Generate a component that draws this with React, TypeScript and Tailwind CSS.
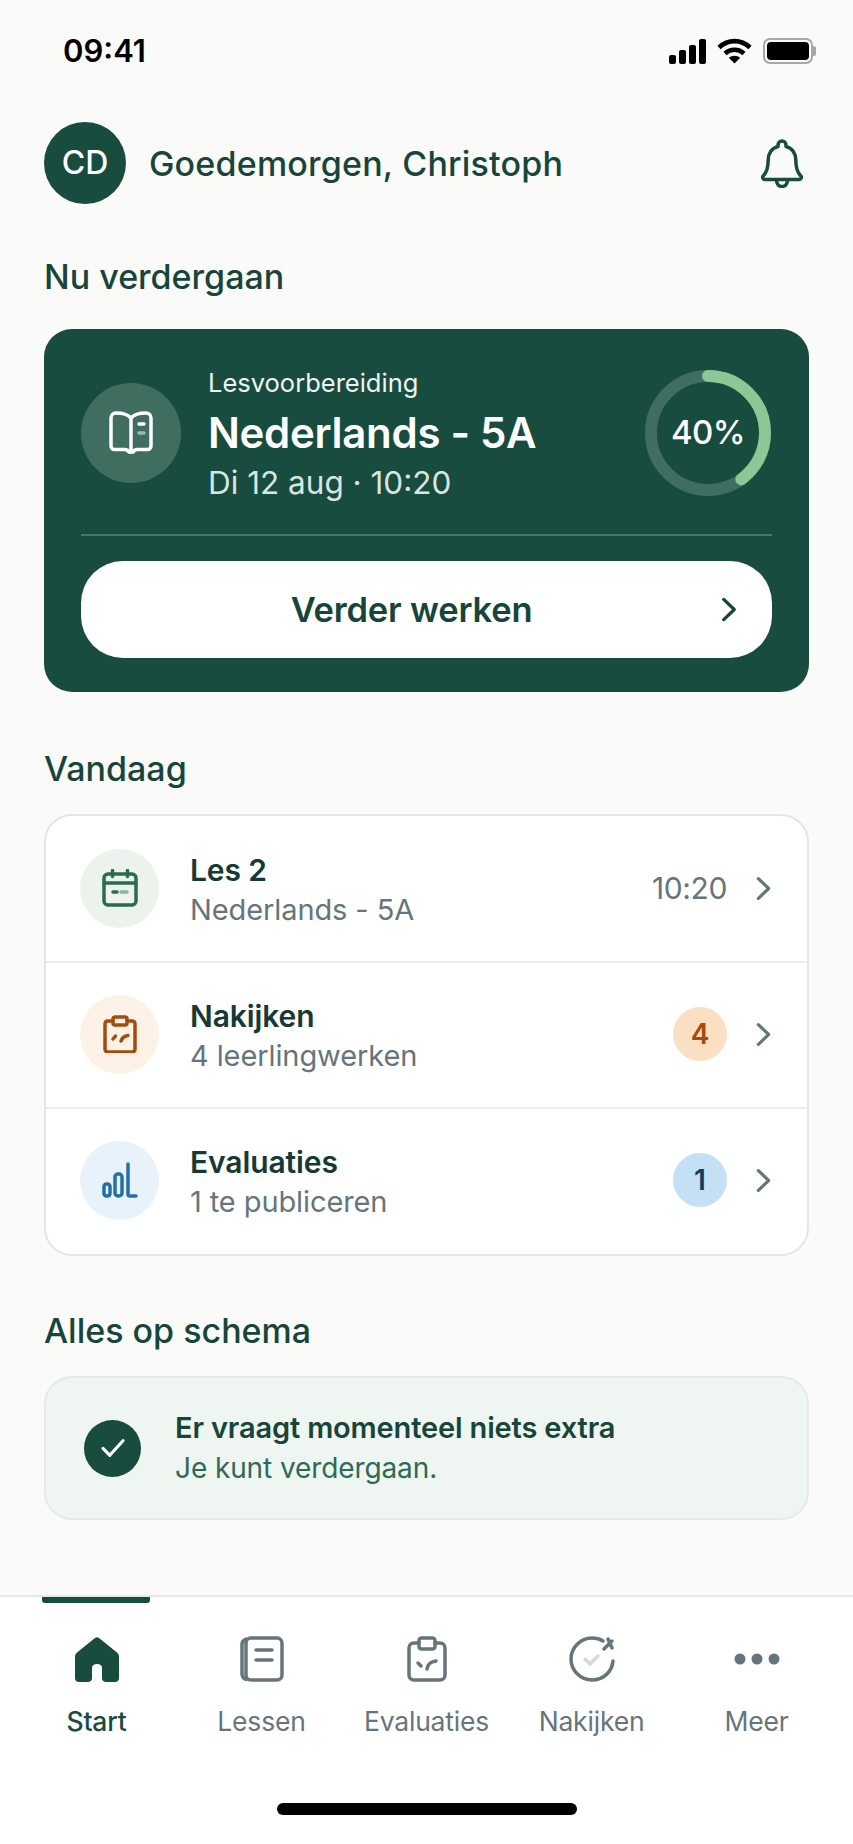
import React from 'react';

const font = { fontFamily: 'Inter, "Noto Sans", sans-serif' };

function Chevron({ className }: { className: string }) {
  return (
    <svg viewBox="0 0 16 26" fill="none" stroke="currentColor" strokeWidth="3.4" strokeLinecap="round" strokeLinejoin="round" className={className}>
      <path d="M2.5 2.5 13.5 13 2.5 23.5" />
    </svg>
  );
}

function StatusBar() {
  return (
    <div className="flex h-[104px] items-start justify-between pl-[63px] pr-[37px] pt-[34px]">
      <span className="text-[31px] leading-[34px] font-semibold text-black">09:41</span>
      <div className="flex items-center gap-[11px] pt-[4px]">
        <svg viewBox="0 0 37 25" className="h-[25px] w-[37px]" fill="#000">
          <rect x="0" y="16" width="7" height="9" rx="2" />
          <rect x="10" y="11" width="7" height="14" rx="2" />
          <rect x="20" y="6" width="7" height="19" rx="2" />
          <rect x="30" y="0" width="7" height="25" rx="2" />
        </svg>
        <svg viewBox="0 0 35 26" className="h-[26px] w-[35px]" fill="none" stroke="#000" strokeWidth="4.6">
          <path d="M2 9.5C11 1 24 1 33 9.5" />
          <path d="M8 15.5C13.5 10.5 21.5 10.5 27 15.5" />
          <path d="M17.5 25.5 11.8 19.8C15 17 20 17 23.2 19.8Z" fill="#000" stroke="none" />
        </svg>
        <div className="flex items-center">
          <div className="h-[26px] w-[50px] rounded-[7px] border-2 border-[#a8a8a8] p-[2px]">
            <div className="h-full w-full rounded-[4px] bg-black" />
          </div>
          <div className="h-[10px] w-[3px] rounded-r-[2px] bg-[#a8a8a8]" />
        </div>
      </div>
    </div>
  );
}

function Header() {
  return (
    <div className="flex items-center justify-between pl-[44px] pr-[50px] pt-[18px]">
      <div className="flex items-center gap-[23px]">
        <div className="flex h-[82px] w-[82px] items-center justify-center rounded-full bg-[#174c3f] text-[32px] font-medium text-white">CD</div>
        <span className="text-[34px] font-medium tracking-[0.2px] text-[#174539]">Goedemorgen, Christoph</span>
      </div>
      <svg viewBox="0 0 42 49" fill="none" stroke="#174c3f" strokeWidth="3.5" strokeLinejoin="round" className="h-[49px] w-[42px]">
        <path d="M21 2c2.300 0 4 1.800 4 4.200v1.300c6.500 1.800 9.800 7.200 9.800 13.500 0 7 1 12 5 16 1.200 1.300.5 3.500-1.500 3.500h-34.600c-2 0-2.700-2.200-1.500-3.500 4-4 5-9 5-16 0-6.300 3.300-11.700 9.800-13.500v-1.300c0-2.400 1.700-4.200 4-4.200Z" />
        <path d="M15.500 41c0 4 2.300 6.500 5.500 6.500s5.500-2.500 5.500-6.500" />
      </svg>
    </div>
  );
}

function Ring() {
  // 40% voortgang
  const r = 57;
  const c = 2 * Math.PI * r;
  return (
    <div className="relative h-[128px] w-[128px] shrink-0">
      <svg viewBox="0 0 128 128" className="h-full w-full -rotate-90" fill="none" strokeWidth="12">
        <circle cx="64" cy="64" r={r} stroke="#3f6e61" />
        <circle cx="64" cy="64" r={r} stroke="#8cc795" strokeLinecap="round" strokeDasharray={`${c * 0.4} ${c}`} />
      </svg>
      <span className="absolute inset-0 flex items-center justify-center text-[33px] font-medium tracking-[-0.5px] text-white">40%</span>
    </div>
  );
}

function ContinueCard() {
  return (
    <div className="mx-[44px] mt-[32px] h-[363px] rounded-[28px] bg-[#174c3f] px-[37px] pt-[29px]">
      <div className="flex h-[150px] items-center">
        <div className="flex h-[100px] w-[100px] shrink-0 items-center justify-center rounded-full bg-[#3f6e61]">
          <svg viewBox="0 0 44 44" fill="none" stroke="#fff" strokeWidth="3.500" strokeLinejoin="round" strokeLinecap="round" className="h-[44px] w-[44px]">
            <path d="M22 7C19 3.500 14 2 7 2 4 2 2 4 2 7v28c0 2 1.500 3.500 3.500 3.500h10c2 0 3.500.8 4.500 2.500h4c1-1.700 2.500-2.500 4.500-2.500h10c2 0 3.500-1.500 3.500-3.500V7c0-3-2-5-5-5-7 0-12 1.500-15 5Z" />
            <path d="M22 7v34" />
            <path d="M30 13h5" />
            <path d="M30 22h5" stroke="#9db8af" />
          </svg>
        </div>
        <div className="ml-[27px] flex flex-1 flex-col">
          <span className="text-[25.5px] leading-[50px] text-[#eef4f1]">Lesvoorbereiding</span>
          <span className="text-[42px] leading-[50px] font-semibold tracking-[-0.3px] text-white">Nederlands - 5A</span>
          <span className="text-[31.5px] leading-[50px] text-[#d9e5e0]">Di 12 aug · 10:20</span>
        </div>
        <Ring />
      </div>
      <div className="mt-[26px] h-[2px] bg-[#44786a]" />
      <div className="relative mt-[25px] flex h-[97px] items-center justify-center rounded-[42px] bg-white pr-[30px]">
        <span className="text-[34.5px] font-semibold tracking-[-0.2px] text-[#174539]">Verder werken</span>
        <Chevron className="absolute right-[35px] top-[36px] h-[25px] w-[16px] text-[#174539]" />
      </div>
    </div>
  );
}

type RowProps = {
  icon: React.ReactNode;
  iconBg: string;
  title: string;
  sub: string;
  right: React.ReactNode;
  rowClass: string;
};

function Row({ icon, iconBg, title, sub, right, rowClass }: RowProps) {
  return (
    <div className={`flex items-center pl-[34px] pr-[36px] ${rowClass}`}>
      <div className={`flex h-[79px] w-[79px] shrink-0 items-center justify-center rounded-full ${iconBg}`}>{icon}</div>
      <div className="ml-[31px] flex flex-1 flex-col pt-[4px]">
        <span className="text-[30px] leading-[40px] font-semibold tracking-[-0.1px] text-[#163a32]">{title}</span>
        <span className="text-[29px] leading-[40px] tracking-[-0.1px] text-[#66757a]">{sub}</span>
      </div>
      {right}
      <Chevron className="ml-[29px] h-[25px] w-[15px] text-[#66757a]" />
    </div>
  );
}

function TodayCard() {
  return (
    <div className="mx-[44px] mt-[25px] h-[442px] overflow-hidden rounded-[28px] border-2 border-[#e2e6e5] bg-white">
      <Row
        iconBg="bg-[#ebf3ec]"
        title="Les 2"
        sub="Nederlands - 5A"
        rowClass="h-[147px] pb-[1px] border-b-2 border-[#eceeed]"
        right={<span className="text-[30px] tracking-[-0.4px] text-[#66757a]">10:20</span>}
        icon={
          <svg viewBox="0 0 36 38" fill="none" stroke="#2c6b50" strokeWidth="3.500" strokeLinecap="round" className="h-[38px] w-[36px]">
            <rect x="2" y="5" width="32" height="31" rx="4" />
            <path d="M2 14h32M10.500 1.500v6M25.500 1.500v6" />
            <path d="M11 23h4" />
            <path d="M19 23h6" stroke="#8db59f" />
          </svg>
        }
      />
      <Row
        iconBg="bg-[#fdf2e7]"
        title="Nakijken"
        sub="4 leerlingwerken"
        rowClass="h-[146px] pb-[2px] border-b-2 border-[#eceeed]"
        right={<div className="flex h-[54px] w-[54px] items-center justify-center rounded-full bg-[#fbdfc2] text-[28px] font-semibold text-[#a24d0d]">4</div>}
        icon={
          <svg viewBox="0 0 34 38" fill="none" stroke="#a24d0d" strokeWidth="3.500" strokeLinecap="round" strokeLinejoin="round" className="h-[38px] w-[34px]">
            <path d="M10 6H5C3 6 2 7 2 9v25c0 2 1 3 3 3h24c2 0 3-1 3-3V9c0-2-1-3-3-3h-5" />
            <rect x="10" y="2" width="14" height="8" rx="2" />
            <path d="M10 24l2.500-3M18 26c1-3 3-5 7-5.500" />
          </svg>
        }
      />
      <Row
        iconBg="bg-[#e8f2fb]"
        title="Evaluaties"
        sub="1 te publiceren"
        rowClass="h-[146px] pb-[4px]"
        right={<div className="flex h-[54px] w-[54px] items-center justify-center rounded-full bg-[#c5dff4] text-[28px] font-semibold text-[#143c5c]">1</div>}
        icon={
          <svg viewBox="0 0 36 36" fill="none" stroke="#2270ab" strokeWidth="3.500" strokeLinecap="round" strokeLinejoin="round" className="h-[36px] w-[36px]">
            <rect x="2" y="22" width="6" height="12" rx="2.500" />
            <rect x="13" y="12" width="7" height="22" rx="3" />
            <path d="M26 2v30c0 1.500.5 2 2 2h6" />
          </svg>
        }
      />
    </div>
  );
}

function AllClear() {
  return (
    <div className="mx-[44px] mt-[25px] flex h-[144px] items-center rounded-[28px] border-2 border-[#e4ebe5] bg-[#eff5f0] pl-[38px]">
      <div className="flex h-[57px] w-[57px] shrink-0 items-center justify-center rounded-full bg-[#174c3f]">
        <svg viewBox="0 0 28 22" fill="none" stroke="#fff" strokeWidth="3.500" strokeLinecap="round" strokeLinejoin="round" className="h-[20px] w-[26px]">
          <path d="M3 11.500 10.500 19 25 3" />
        </svg>
      </div>
      <div className="ml-[34px] flex flex-col">
        <span className="text-[29px] leading-[40px] font-semibold tracking-[-0.15px] text-[#174539]">Er vraagt momenteel niets extra</span>
        <span className="text-[28px] leading-[40px] tracking-[-0.1px] text-[#2f6a58]">Je kunt verdergaan.</span>
      </div>
    </div>
  );
}

function NavItem({ label, active, children }: { label: string; active?: boolean; children: React.ReactNode }) {
  return (
    <div className="flex w-[165px] flex-col items-center">
      <div className="flex h-[46px] items-center justify-center">{children}</div>
      <span className={`mt-[23px] text-[26.5px] leading-[32px] tracking-[-0.2px] ${active ? 'font-medium text-[#174c3f]' : 'text-[#66757a]'}`}>{label}</span>
    </div>
  );
}

function BottomNav() {
  return (
    <div className="relative mt-[75px] flex flex-1 flex-col border-t-2 border-[#e4e8e6] bg-white">
      <div className="absolute left-[42px] top-0 h-[6px] w-[108px] rounded-b-[3px] bg-[#174c3f]" />
      <div className="flex px-[14px] pt-[39px]">
        <NavItem label="Start" active>
          <svg viewBox="0 0 44 45" fill="#174c3f" className="h-[45px] w-[44px]">
            <path d="M20 1c1.200-1 2.800-1 4 0L42 15.500c1.300 1.100 2 2.500 2 4.500v21c0 2.500-1.500 4-4 4H31c-2 0-4-1.500-4-3.500V31c0-2.500-2-4-5-4s-5 1.500-5 4v10.500c0 2-2 3.500-4 3.500H4c-2.500 0-4-1.500-4-4V20c0-2 .7-3.400 2-4.500Z" />
          </svg>
        </NavItem>
        <NavItem label="Lessen">
          <svg viewBox="0 0 44 46" fill="none" stroke="#66757a" strokeWidth="3.500" strokeLinecap="round" strokeLinejoin="round" className="h-[46px] w-[44px]">
            <rect x="6" y="2" width="36" height="42" rx="5" />
            <path d="M6 3C3.500 4 2 6 2 8v30c0 2.500 1.500 4.500 4 5.500" />
            <path d="M16 14h16M16 24h16" />
          </svg>
        </NavItem>
        <NavItem label="Evaluaties">
          <svg viewBox="0 0 40 46" fill="none" stroke="#66757a" strokeWidth="3.500" strokeLinecap="round" strokeLinejoin="round" className="h-[46px] w-[40px]">
            <path d="M12 7H7c-3 0-5 2-5 5v27c0 3 2 5 5 5h26c3 0 5-2 5-5V12c0-3-2-5-5-5h-5" />
            <rect x="12" y="2" width="16" height="11" rx="2.500" />
            <path d="M11 27l3 3M20 33c1-5 3-7 9-8" />
          </svg>
        </NavItem>
        <NavItem label="Nakijken">
          <svg viewBox="0 0 46 46" fill="none" stroke="#66757a" strokeWidth="3.500" strokeLinecap="round" strokeLinejoin="round" className="h-[46px] w-[46px]">
            <path d="M44 25C43 36 34 44 23 44 11.500 44 2 34.500 2 23S11.500 2 23 2c4 0 8 1 11 3" />
            <path d="M39 3 43 12M35 13 43 5" />
            <path d="M16 23l5 5 8-8" stroke="#d5d9d8" />
          </svg>
        </NavItem>
        <NavItem label="Meer">
          <svg viewBox="0 0 46 12" fill="#66757a" className="h-[12px] w-[46px]">
            <circle cx="6" cy="6" r="5.500" />
            <circle cx="23" cy="6" r="5.500" />
            <circle cx="40" cy="6" r="5.500" />
          </svg>
        </NavItem>
      </div>
      <div className="mt-[66px] flex justify-center">
        <div className="h-[12px] w-[300px] rounded-full bg-black" />
      </div>
    </div>
  );
}

export default function App() {
  return (
    <div style={font} className="flex h-[1844px] w-[853px] flex-col overflow-hidden bg-[#fafaf8]">
      <StatusBar />
      <Header />
      <h2 className="mt-[53px] ml-[44px] text-[34px] leading-[40px] font-medium text-[#174539]">Nu verdergaan</h2>
      <ContinueCard />
      <h2 className="mt-[57px] ml-[44px] text-[34px] leading-[40px] font-medium text-[#174539]">Vandaag</h2>
      <TodayCard />
      <h2 className="mt-[55px] ml-[44px] text-[34px] leading-[40px] font-medium text-[#174539]">Alles op schema</h2>
      <AllClear />
      <BottomNav />
    </div>
  );
}
